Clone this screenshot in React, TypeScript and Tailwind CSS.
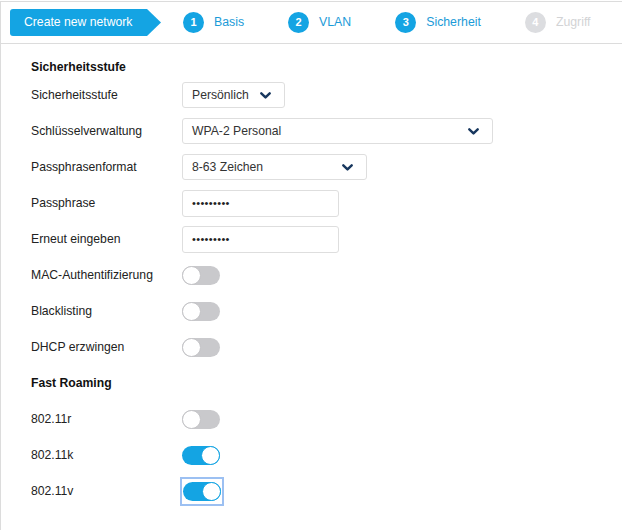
import React from "react";

const BLUE = "#14a4e3";

function Chevron() {
  return (
    <svg width="11" height="7" viewBox="0 0 11 7" className="shrink-0">
      <polyline points="1.3,1.3 5.5,5.4 9.7,1.3" fill="none" stroke="#17375e" strokeWidth="2.4" strokeLinecap="round" strokeLinejoin="round" />
    </svg>
  );
}

function Step({ n, label, active }: { n: number; label: string; active: boolean }) {
  return (
    <div className="flex items-center gap-[10px]">
      <div
        className={
          "w-[21px] h-[21px] rounded-full flex items-center justify-center text-[11px] font-bold text-white " +
          (active ? "bg-[#14a4e3]" : "bg-[#dcdde0]")
        }
      >
        {n}
      </div>
      <span className={"text-[12.3px] " + (active ? "text-[#1b9bd8]" : "text-[#d2d3d5]")}>{label}</span>
    </div>
  );
}

function Toggle({ on, focus }: { on: boolean; focus?: boolean }) {
  const t = (
    <div
      className={
        "w-[38px] h-[19px] rounded-full flex items-center " +
        (on ? "bg-[#14a4e3] justify-end" : "bg-[#c9c9cc] justify-start")
      }
    >
      <div
        className={
          "w-[19px] h-[19px] rounded-full bg-white border " +
          (on ? "border-[#14a4e3]" : "border-[#c4c4c7]")
        }
      />
    </div>
  );
  if (focus) {
    return <div className="ml-[-2px] p-[1px] border-2 border-[#9cc0f2] -my-[4px] py-[3px]">{t}</div>;
  }
  return t;
}

function Row({ label, children }: { label: string; children?: React.ReactNode }) {
  return (
    <div className="h-[36px] flex items-center">
      <div className="w-[151px] shrink-0 text-[12.2px] text-[#222]">{label}</div>
      {children}
    </div>
  );
}

function Select({ value, width }: { value: string; width: number }) {
  return (
    <div
      className="h-[26px] border border-[#dedede] rounded-[3px] bg-white flex items-center justify-between pl-[9px] pr-[13px] text-[12.2px] text-[#333]"
      style={{ width }}
    >
      <span>{value}</span>
      <Chevron />
    </div>
  );
}

function Input() {
  return (
    <div className="w-[157px] h-[27px] border border-[#dedede] rounded-[3px] bg-white flex items-center pl-[9px] text-[11px] tracking-[0.35px] text-[#222]">
      •••••••••
    </div>
  );
}

export default function App() {
  return (
    <div className="w-[622px] h-[530px] bg-white pt-px" style={{ fontFamily: '"Liberation Sans", Arial, sans-serif' }}>
      <div className="h-full border-l border-t border-[#dcdcdc]">
        <div className="h-[42px] border-b border-[#dcdcdc] flex items-center pl-[9px]">
          <div className="flex items-center">
            <div className="h-[27px] w-[136px] bg-[#14a4e3] rounded-l-[3px] flex items-center pl-[14px] text-[12.2px] text-white">
              Create new network
            </div>
            <svg width="15" height="27" viewBox="0 0 15 27" className="block">
              <polygon points="0,0 1,0 15,13.5 1,27 0,27" fill={BLUE} />
            </svg>
          </div>
          <div className="flex items-center gap-[44px] ml-[22px]">
            <Step n={1} label="Basis" active />
            <Step n={2} label="VLAN" active />
            <Step n={3} label="Sicherheit" active />
            <Step n={4} label="Zugriff" active={false} />
          </div>
        </div>
        <div className="pl-[30px] pt-[13px]">
          <div className="h-[20px] flex items-center text-[12.2px] font-bold text-[#111]">Sicherheitsstufe</div>
          <Row label="Sicherheitsstufe">
            <Select value="Persönlich" width={103} />
          </Row>
          <Row label="Schlüsselverwaltung">
            <Select value="WPA-2 Personal" width={311} />
          </Row>
          <Row label="Passphrasenformat">
            <Select value="8-63 Zeichen" width={185} />
          </Row>
          <Row label="Passphrase">
            <Input />
          </Row>
          <Row label="Erneut eingeben">
            <Input />
          </Row>
          <Row label="MAC-Authentifizierung">
            <Toggle on={false} />
          </Row>
          <Row label="Blacklisting">
            <Toggle on={false} />
          </Row>
          <Row label="DHCP erzwingen">
            <Toggle on={false} />
          </Row>
          <div className="h-[36px] flex items-center text-[12.2px] font-bold text-[#111]">Fast Roaming</div>
          <Row label="802.11r">
            <Toggle on={false} />
          </Row>
          <Row label="802.11k">
            <Toggle on />
          </Row>
          <Row label="802.11v">
            <Toggle on focus />
          </Row>
        </div>
      </div>
    </div>
  );
}
